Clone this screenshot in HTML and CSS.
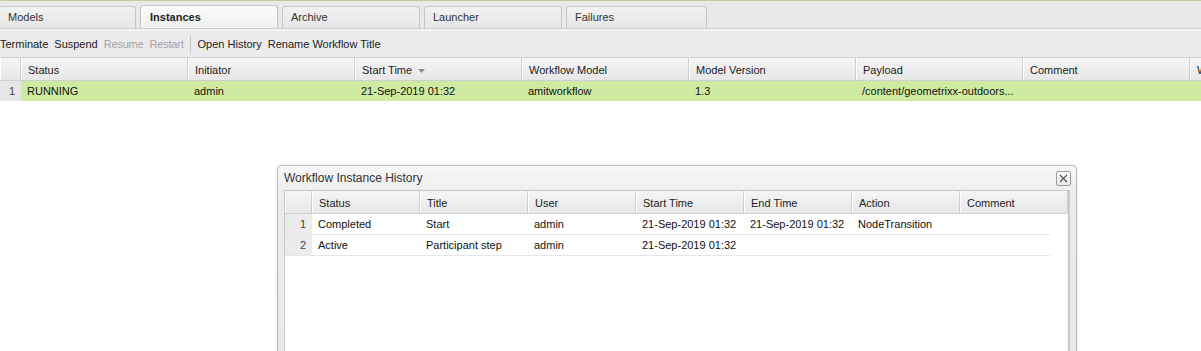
FILE: index.html
```html
<!DOCTYPE html>
<html lang="en">

<head>
    <meta charset="UTF-8">
    <title>Workflow Console</title>
    <link rel="stylesheet" href="styles.css">
</head>

<body>
    <div class="topline"></div>

    <div class="tabbar">
        <div class="tab first">Models</div>
        <div class="tab active">Instances</div>
        <div class="tab">Archive</div>
        <div class="tab">Launcher</div>
        <div class="tab last">Failures</div>
    </div>

    <div class="toolbar">
        <span class="tbtn">Terminate</span>
        <span class="tbtn">Suspend</span>
        <span class="tbtn disabled">Resume</span>
        <span class="tbtn disabled">Restart</span>
        <span class="tsep"></span>
        <span class="tbtn">Open History</span>
        <span class="tbtn">Rename Workflow Title</span>
    </div>

    <div class="grid main-grid">
        <div class="grid-head">
            <div class="cell num"></div>
            <div class="cell">Status</div>
            <div class="cell">Initiator</div>
            <div class="cell sorted">Start Time
                <svg class="sort-arrow" width="7" height="4" viewBox="0 0 7 4"><path d="M0 0 L7 0 L3.5 4 Z" fill="#8c8c8c"/></svg>
            </div>
            <div class="cell">Workflow Model</div>
            <div class="cell">Model Version</div>
            <div class="cell">Payload</div>
            <div class="cell">Comment</div>
            <div class="cell">W</div>
        </div>
        <div class="grid-row selected">
            <div class="cell num">1</div>
            <div class="cell">RUNNING</div>
            <div class="cell">admin</div>
            <div class="cell">21-Sep-2019 01:32</div>
            <div class="cell">amitworkflow</div>
            <div class="cell">1.3</div>
            <div class="cell">/content/geometrixx-outdoors...</div>
            <div class="cell"></div>
            <div class="cell"></div>
        </div>
    </div>

    <!-- floating history window -->
    <div class="window">
        <div class="window-title">
            <span>Workflow Instance History</span>
            <span class="close-btn">
                <svg width="9" height="9" viewBox="0 0 9 9"><path d="M1 1 L8 8 M8 1 L1 8" stroke="#555" stroke-width="1.2"/></svg>
            </span>
        </div>
        <div class="window-body">
            <div class="grid history-grid">
                <div class="grid-head">
                    <div class="cell num"></div>
                    <div class="cell">Status</div>
                    <div class="cell">Title</div>
                    <div class="cell">User</div>
                    <div class="cell">Start Time</div>
                    <div class="cell">End Time</div>
                    <div class="cell">Action</div>
                    <div class="cell">Comment</div>
                </div>
                <div class="grid-row">
                    <div class="cell num">1</div>
                    <div class="cell">Completed</div>
                    <div class="cell">Start</div>
                    <div class="cell">admin</div>
                    <div class="cell">21-Sep-2019 01:32</div>
                    <div class="cell">21-Sep-2019 01:32</div>
                    <div class="cell">NodeTransition</div>
                    <div class="cell"></div>
                </div>
                <div class="grid-row">
                    <div class="cell num">2</div>
                    <div class="cell">Active</div>
                    <div class="cell">Participant step</div>
                    <div class="cell">admin</div>
                    <div class="cell">21-Sep-2019 01:32</div>
                    <div class="cell"></div>
                    <div class="cell"></div>
                    <div class="cell"></div>
                </div>
            </div>
        </div>
    </div>
</body>

</html>
```

FILE: styles.css
```css
body {
    margin: 0;
    font-family: "Liberation Sans", Arial, sans-serif;
    font-size: 11px;
    color: #222;
    background: #fff;
    width: 1201px;
    height: 351px;
    overflow: hidden;
    position: relative;
}

.topline {
    height: 1px;
    background: #b9d197;
}

/* tabs */
.tabbar {
    display: flex;
    align-items: flex-end;
    height: 27px;
    background: #e9e9e9;
    border-bottom: 1px solid #cdcdcd;
    gap: 4px;
}

.tab {
    box-sizing: border-box;
    width: 138px;
    height: 22px;
    padding: 4px 0 0 8px;
    background: linear-gradient(#f2f2f2, #e6e6e6);
    border: 1px solid #c6c6c6;
    border-bottom: none;
    border-radius: 3px 3px 0 0;
    color: #333;
}

.tab.first {
    width: 137px;
    margin-left: -1px;
}

.tab.last {
    width: 141px;
}

.tab.active {
    height: 23px;
    padding: 5px 0 0 9px;
    background: linear-gradient(#fbfbfb, #f1f1f1);
    font-weight: bold;
    color: #222;
}

/* toolbar */
.toolbar {
    display: flex;
    align-items: center;
    height: 26px;
    border-top: 2px solid #f3f3f3;
    border-bottom: 1px solid #d2d2d2;
    background: #ebebeb;
    gap: 6px;
}

.tbtn {
    color: #222;
}

.tbtn.disabled {
    color: #a3a3a3;
    letter-spacing: -0.2px;
}

.tsep {
    width: 1px;
    height: 17px;
    background: #c4c4c4;
    margin: 0 1px 0 0;
}

/* grids */
.grid-head,
.grid-row {
    display: flex;
}

.grid-head {
    height: 22px;
    background: linear-gradient(#f5f5f5, #e7e7e7);
    border-bottom: 1px solid #d0d0d0;
}

.grid-head .cell {
    border-right: 1px solid #d0d0d0;
    border-left: 1px solid #fff;
    padding-top: 1px;
    line-height: 22px;
}

.grid-row {
    height: 20px;
    line-height: 20px;
}

.cell {
    box-sizing: border-box;
    flex: none;
    padding-left: 6px;
    white-space: nowrap;
    overflow: hidden;
}

.cell.num {
    text-align: right;
    padding: 0 6px 0 0;
    background: #ececec;
    color: #444;
}

.grid-head .cell.num {
    background: none;
}

.sort-arrow {
    margin-left: 3px;
    vertical-align: middle;
}

.main-grid {
    width: 1201px;
    overflow: hidden;
}

.main-grid .cell {
    width: 167px;
}

.main-grid .cell.num {
    width: 21px;
}

.main-grid .grid-row.selected {
    background: #cfeaa1;
    color: #111;
}

.main-grid .grid-row.selected .cell.num {
    background: #e6e6e6;
}

/* window */
.window {
    position: absolute;
    left: 277px;
    top: 165px;
    width: 800px;
    height: 186px;
    box-sizing: border-box;
    display: flex;
    flex-direction: column;
    border: 1px solid #b9b9b9;
    border-bottom: none;
    border-radius: 5px 5px 0 0;
    background: linear-gradient(#f7f7f7, #ececec 30px, #e9e9e9);
    box-shadow: 0 0 3px rgba(0, 0, 0, 0.12);
}

.window-title {
    display: flex;
    justify-content: space-between;
    align-items: center;
    height: 24px;
    padding: 0 5px 0 6px;
    font-size: 12px;
    color: #333;
}

.close-btn {
    display: flex;
    align-items: center;
    justify-content: center;
    width: 13px;
    height: 13px;
    border: 1px solid #9d9d9d;
    border-radius: 2px;
    background: linear-gradient(#fdfdfd, #e9e9e9);
}

.window-body {
    flex: 1;
    margin: 0 6px;
    border: 1px solid #c9c9c9;
    border-bottom: none;
    border-right-width: 2px;
    background: #fff;
}

.history-grid .cell {
    width: 108px;
}

.history-grid .cell.num {
    width: 27px;
}

.history-grid .grid-row {
    width: 765px;
    border-bottom: 1px solid #e6e6e6;
    color: #111;
}
```
